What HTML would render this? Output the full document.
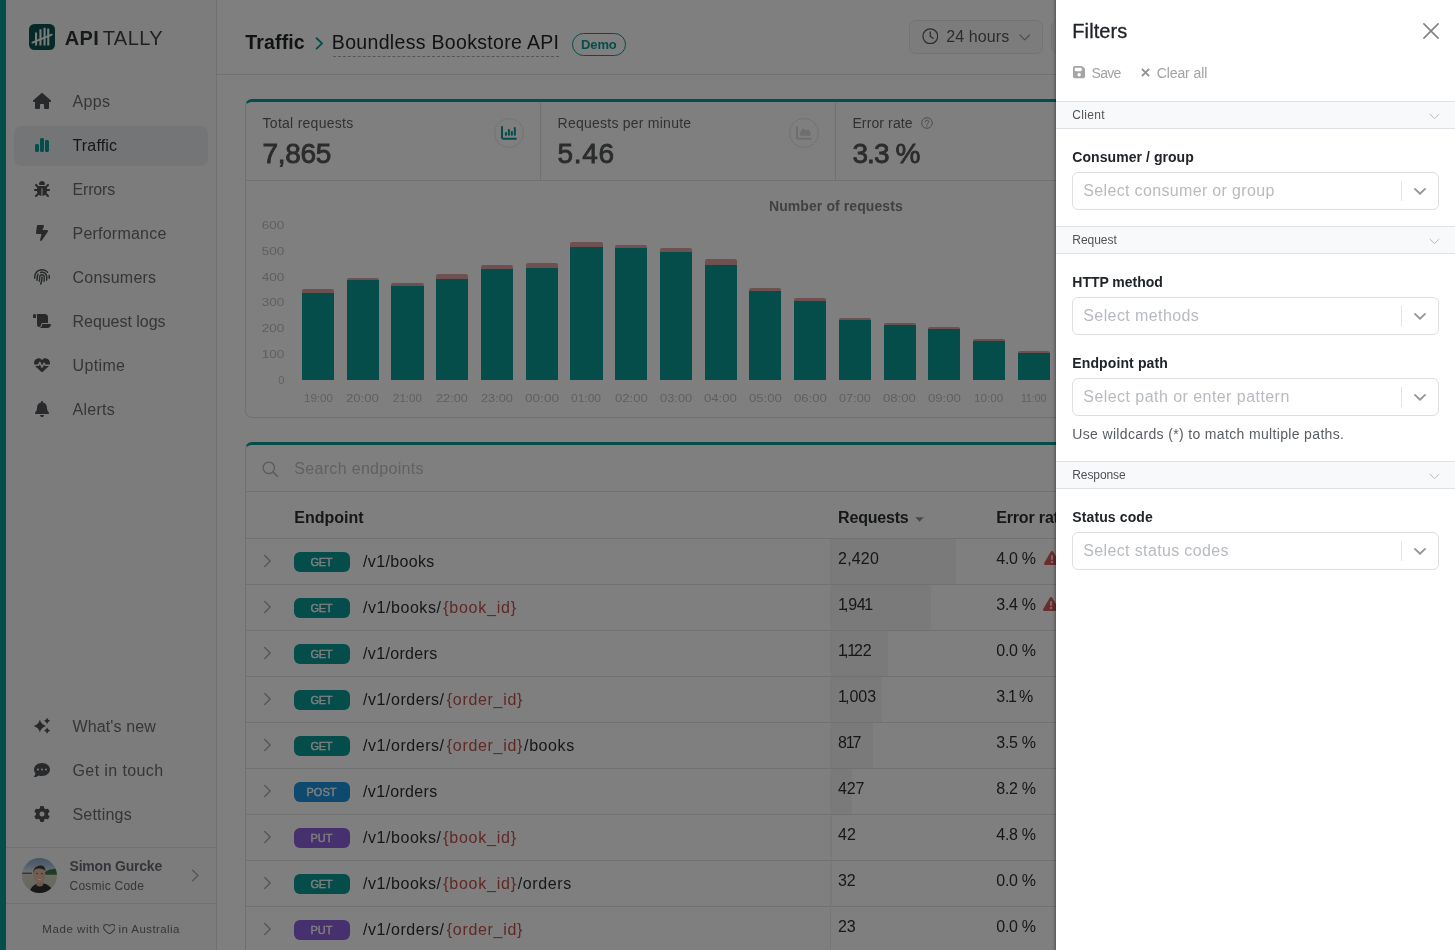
<!DOCTYPE html>
<html lang="en"><head><meta charset="utf-8"><title>Apitally - Traffic</title>
<style>
*{box-sizing:border-box}
html,body{margin:0;padding:0}
body{font-family:"Liberation Sans",sans-serif;background:#fff;width:1455px;height:950px;overflow:hidden;position:relative}
#app{position:absolute;left:0;top:0;width:1455px;height:950px;overflow:hidden;background:#fff;opacity:.9999}
.t{position:absolute;white-space:pre;line-height:1}
.abs{position:absolute}
#stripe{left:0;top:0;width:6px;height:950px;background:#0a9a97}
#sidebar{left:6px;top:0;width:211px;height:950px;background:#f8f9fa;border-right:1px solid #dee2e6}
#active{left:14px;top:126px;width:194px;height:40px;border-radius:7px;background:#e9ebed}
#header{left:217px;top:0;width:1238px;height:75px;border-bottom:1px solid #dee2e6;background:#fff}
.card{background:#fff;border:1px solid #dcdfe3;border-top:3px solid #0a9a97;border-radius:7px}
#card1{left:245px;top:99px;width:1182px;height:319px}
#card2{left:245px;top:442px;width:1182px;height:560px;border-bottom-left-radius:0}
.hl{position:absolute;height:1px;background:#dee2e6}
.vl{position:absolute;width:1px;background:#dee2e6}
#backdrop{left:0;top:0;width:1455px;height:950px;background:#000;opacity:.5}
#panel{left:1056px;top:0;width:399px;height:950px;background:#fff}
#pshadow{left:1052px;top:0;width:4px;height:950px;background:linear-gradient(90deg,rgba(0,0,0,0),rgba(0,0,0,.04) 25%,rgba(0,0,0,.12) 60%,rgba(0,0,0,.3))}
.sec{position:absolute;left:0;width:399px;height:28px;background:#f8f9fa;border-top:1px solid #dee2e6;border-bottom:1px solid #dee2e6}
.sel{position:absolute;left:16px;width:367px;height:38px;border:1px solid #dddfe0;border-radius:6px;background:#fff}
.sel i{position:absolute;right:36px;top:8px;width:1px;height:20px;background:#e2e3e4}
.badge{position:absolute;width:56px;height:20px;border-radius:6px}
.bar{position:absolute;background:#0a9a97}
.ebar{position:absolute;background:#dda0a0}
.rbar{position:absolute;left:830px;height:45px;background:#f4f5f7}
</style></head><body>
<div id="app">
 <div class="abs" id="header"></div>
 <div class="abs" id="sidebar"></div>
 <div class="abs" id="stripe"></div>
 <div class="abs" id="active"></div>
 <div class="abs" style="left:29px;top:24px;width:26px;height:25.5px;border-radius:5.5px;background:#0a5250"></div><svg class="abs" style="left:29.00px;top:24.00px" width="26.00" height="25.50" viewBox="0 0 26 25.5"><g fill="#f4f6f6"><rect x="6" y="8.4" width="2.1" height="13.2" rx=".3"/><rect x="10.4" y="5.3" width="2.1" height="16.3" rx=".3"/><rect x="14.5" y="3.8" width="2.1" height="17.8" rx=".3"/><rect x="18.2" y="4.4" width="2.1" height="17.2" rx=".3"/></g><path d="M3.4 18.6 L22.8 10.6" stroke="#f4f6f6" stroke-width="1.8" stroke-linecap="round"/></svg>
<svg class="abs" style="left:33.00px;top:93.00px" width="18.00" height="16.00" viewBox="0 0 576 512"><path fill="#505256" fill-rule="evenodd" d="M575.8 255.5c0 18-15 32.100-32 32.100h-32l.7 160.200c0 2.700-.2 5.400-.5 8.100V472c0 22.100-17.900 40-40 40H456c-1.100 0-2.200 0-3.300-.1c-1.400 .1-2.800 .1-4.200 .1H416 392c-22.100 0-40-17.900-40-40V448 384c0-17.700-14.300-32-32-32H256c-17.700 0-32 14.300-32 32v64 24c0 22.100-17.900 40-40 40H160 128.100c-1.500 0-3-.1-4.500-.2c-1.200 .1-2.400 .2-3.600 .2H104c-22.100 0-40-17.900-40-40V360c0-.9 0-1.900 .1-2.800V287.600H32c-18 0-32-14-32-32.100c0-9 3-17 10-24L266.400 8c7-7 15-8 22-8s15 2 21 7L564.800 231.500c8 7 12 15 11 24z"/></svg>
<svg class="abs" style="left:35.00px;top:137.00px" width="14.00" height="16.00" viewBox="0 0 448 512"><path fill="#0a9a97" fill-rule="evenodd" d="M160 80c0-26.500 21.500-48 48-48h32c26.500 0 48 21.500 48 48V432c0 26.500-21.500 48-48 48H208c-26.500 0-48-21.500-48-48V80zM0 272c0-26.500 21.500-48 48-48H80c26.500 0 48 21.500 48 48V432c0 26.500-21.500 48-48 48H48c-26.500 0-48-21.500-48-48V272zM368 96h32c26.500 0 48 21.500 48 48V432c0 26.500-21.500 48-48 48H368c-26.500 0-48-21.500-48-48V144c0-26.500 21.500-48 48-48z"/></svg>
<svg class="abs" style="left:34.00px;top:181.00px" width="16.00" height="16.00" viewBox="0 0 512 512"><path fill="#505256" fill-rule="evenodd" d="M256 0c53 0 96 43 96 96v3.600c0 15.700-12.700 28.400-28.400 28.400H188.400c-15.700 0-28.400-12.700-28.400-28.400V96c0-53 43-96 96-96zM41.400 105.400c12.500-12.500 32.800-12.500 45.300 0l64 64c.7 .7 1.300 1.400 1.900 2.100c14.200-7.300 30.400-11.400 47.500-11.400H312c17.100 0 33.200 4.100 47.500 11.400c.6-.7 1.200-1.400 1.900-2.100l64-64c12.500-12.500 32.800-12.500 45.300 0s12.500 32.800 0 45.300l-64 64c-.7 .7-1.400 1.300-2.100 1.900c6.200 12 10.100 25.300 11.100 39.500H480c17.700 0 32 14.300 32 32s-14.300 32-32 32H416c0 24.600-5.500 47.800-15.400 68.600c2.200 1.300 4.200 2.900 6 4.800l64 64c12.500 12.500 12.500 32.800 0 45.300s-32.800 12.500-45.300 0l-63.100-63.100c-24.500 21.800-55.800 36.200-90.300 39.600V240c0-8.800-7.200-16-16-16s-16 7.200-16 16V479.200c-34.500-3.400-65.800-17.800-90.300-39.600L86.600 502.600c-12.500 12.500-32.800 12.500-45.300 0s-12.500-32.800 0-45.300l64-64c1.900-1.900 3.900-3.500 6-4.800C101.500 367.800 96 344.600 96 320H32c-17.700 0-32-14.300-32-32s14.300-32 32-32H96.300c1.100-14.100 5-27.500 11.100-39.500c-.7-.6-1.400-1.200-2.100-1.900l-64-64c-12.500-12.500-12.500-32.800 0-45.300z"/></svg>
<svg class="abs" style="left:36.00px;top:225.00px" width="12.00" height="16.00" viewBox="0 0 384 512"><path fill="#505256" fill-rule="evenodd" d="M0 256L28.500 28c2-16 15.600-28 31.800-28H228.900c15 0 27.100 12.100 27.100 27.100c0 3.200-.6 6.500-1.700 9.500L208 160H347.300c20.200 0 36.700 16.400 36.700 36.700c0 7.400-2.200 14.600-6.400 20.700l-192.200 281c-5.900 8.600-15.600 13.700-25.900 13.700h-2.900c-15.700 0-28.500-12.800-28.500-28.500c0-2.300 .3-4.600 .9-6.900L176 288H32c-17.700 0-32-14.300-32-32z"/></svg>
<svg class="abs" style="left:34.00px;top:269.00px" width="16.00" height="16.00" viewBox="0 0 512 512"><path fill="#505256" fill-rule="evenodd" d="M48 256C48 141.100 141.100 48 256 48c63.100 0 119.600 28.100 157.800 72.500c8.600 10.100 23.800 11.200 33.800 2.600s11.200-23.800 2.600-33.800C403.300 34.600 333.700 0 256 0C114.600 0 0 114.600 0 256v40c0 13.300 10.700 24 24 24s24-10.700 24-24V256zm458.500-52.900c-2.700-13-15.500-21.300-28.400-18.500s-21.300 15.500-18.500 28.400c2.900 13.900 4.500 28.300 4.500 43.100v40c0 13.300 10.700 24 24 24s24-10.700 24-24V256c0-18.100-1.900-35.800-5.500-52.900zM256 80c-19 0-37.400 3-54.500 8.600c-15.200 5-18.700 23.700-8.300 35.900c7.100 8.300 18.800 10.800 29.400 7.900c10.600-2.900 21.800-4.400 33.400-4.400c70.700 0 128 57.300 128 128v24.900c0 25.200-1.500 50.300-4.400 75.300c-1.700 14.600 9.400 27.800 24.200 27.800c11.800 0 21.900-8.600 23.300-20.300c3.300-27.400 5-55 5-82.700V256c0-97.200-78.800-176-176-176zM150.700 148.700c-9.100-10.600-25.300-11.400-33.900-.4C93.700 178 80 215.400 80 256v24.900c0 24.200-2.600 48.400-7.800 71.900C68.800 368.400 80.100 384 96.100 384c10.500 0 19.900-7 22.200-17.300c6.400-28.100 9.700-56.800 9.700-85.800V256c0-27.200 8.500-52.400 22.900-73.100c7.200-10.400 8-24.600-.2-34.200zM256 160c-53 0-96 43-96 96v24.900c0 35.900-4.600 71.500-13.800 106.100c-3.800 14.300 6.700 29 21.500 29c9.500 0 17.900-6.200 20.400-15.400c10.500-39 15.900-79.200 15.900-119.700V256c0-28.700 23.300-52 52-52s52 23.300 52 52v24.900c0 36.300-3.500 72.400-10.400 107.900c-2.700 13.900 7.700 27.200 21.800 27.200c10.200 0 19-7 21-17c7.700-38.800 11.600-78.300 11.600-118.100V256c0-53-43-96-96-96zm24 96c0-13.300-10.700-24-24-24s-24 10.700-24 24v24.900c0 59.900-11 119.300-32.500 175.200l-5.900 15.300c-4.800 12.400 1.400 26.300 13.800 31s26.300-1.400 31-13.800l5.900-15.300C267.900 411.900 280 346.700 280 280.900V256z"/></svg>
<svg class="abs" style="left:33.00px;top:313.00px" width="18.00" height="16.00" viewBox="0 0 576 512"><path fill="#505256" fill-rule="evenodd" d="M0 80v48c0 17.700 14.300 32 32 32H48 96V80c0-26.500-21.500-48-48-48S0 53.500 0 80zM112 32c10 13.400 16 30 16 48V384c0 35.300 28.700 64 64 64s64-28.700 64-64v-5.300c0-32.400 26.300-58.700 58.700-58.700H480V128c0-53-43-96-96-96H112zM464 480c61.900 0 112-50.100 112-112c0-8.800-7.200-16-16-16H314.700c-14.700 0-26.700 11.900-26.700 26.700V384c0 53-43 96-96 96H368h96z"/></svg>
<svg class="abs" style="left:34.00px;top:357.00px" width="16.00" height="16.00" viewBox="0 0 512 512"><path fill="#505256" fill-rule="evenodd" d="M228.300 469.100L47.600 300.400c-4.200-3.900-8.200-8.100-11.900-12.400h87c22.600 0 43-13.600 51.700-34.500l10.500-25.200 49.300 109.500c3.800 8.500 12.100 14 21.400 14.100s17.800-5 22-13.300L320 253.700l1.700 3.400c9.500 19 28.900 31 50.100 31H476.300c-3.700 4.300-7.700 8.500-11.900 12.400L283.700 469.100c-7.500 7-17.400 10.900-27.700 10.900s-20.200-3.900-27.700-10.900zM503.700 240h-132c-3 0-5.800-1.700-7.200-4.400l-23.200-46.300c-4.100-8.100-12.400-13.300-21.500-13.300s-17.400 5.100-21.500 13.300l-41.400 82.800L205.900 158.200c-3.900-8.700-12.700-14.300-22.200-14.100s-18.100 5.900-21.800 14.800l-31.800 76.300c-1.200 3-4.200 4.900-7.400 4.900H16c-2.600 0-5 .4-7.300 1.100C3 225.200 0 208.200 0 190.900v-5.800c0-69.900 50.500-129.500 119.400-141C165 36.500 211.400 51.400 244 84l12 12 12-12c32.600-32.600 79-47.500 124.600-39.900C461.500 55.600 512 115.200 512 185.100v5.800c0 16.900-2.800 33.500-8.300 49.100z"/></svg>
<svg class="abs" style="left:35.00px;top:401.00px" width="14.00" height="16.00" viewBox="0 0 448 512"><path fill="#505256" fill-rule="evenodd" d="M224 0c-17.700 0-32 14.300-32 32V51.200C119 66 64 130.600 64 208v18.800c0 47-17.300 92.400-48.500 127.600l-7.400 8.300c-8.400 9.400-10.400 22.900-5.300 34.400S19.400 416 32 416H416c12.600 0 24-7.400 29.200-18.900s3.100-25-5.300-34.400l-7.400-8.300C401.300 319.200 384 273.900 384 226.800V208c0-77.400-55-142-128-156.800V32c0-17.700-14.300-32-32-32zm45.300 493.300c12-12 18.700-28.300 18.700-45.300H224 160c0 17 6.700 33.300 18.700 45.300s28.300 18.700 45.300 18.700s33.300-6.700 45.300-18.700z"/></svg>
<svg class="abs" style="left:33.00px;top:717.00px" width="18.00" height="18.00" viewBox="0 0 18 18"><path d="M6.90 2.80 Q8.29 7.61 13.10 9.00 Q8.29 10.39 6.90 15.20 Q5.51 10.39 0.70 9.00 Q5.51 7.61 6.90 2.80 Z M14.10 0.70 Q14.80 3.10 17.20 3.80 Q14.80 4.50 14.10 6.90 Q13.40 4.50 11.00 3.80 Q13.40 3.10 14.10 0.70 Z M14.10 10.50 Q14.80 12.90 17.20 13.60 Q14.80 14.30 14.10 16.70 Q13.40 14.30 11.00 13.60 Q13.40 12.90 14.10 10.50 Z" fill="#505256"/></svg>
<svg class="abs" style="left:34.00px;top:762.00px" width="16.00" height="16.00" viewBox="0 0 512 512"><path fill="#505256" fill-rule="evenodd" d="M256 448c141.400 0 256-93.100 256-208S397.400 32 256 32S0 125.100 0 240c0 45.100 17.700 86.800 47.700 120.900c-1.900 24.500-11.400 46.300-21.400 62.900c-5.500 9.200-11.100 16.600-15.200 21.600c-2.100 2.500-3.700 4.400-4.900 5.700c-.6 .6-1 1.100-1.300 1.400l-.3 .3c-4.600 4.600-5.900 11.400-3.400 17.400c2.500 6 8.300 9.900 14.800 9.900c28.700 0 57.600-8.900 81.600-19.300c22.900-10 42.400-21.900 54.300-30.600c31.800 11.500 67 17.900 104.100 17.900zM128 208a32 32 0 1 1 0 64 32 32 0 1 1 0-64zm128 0a32 32 0 1 1 0 64 32 32 0 1 1 0-64zm96 32a32 32 0 1 1 64 0 32 32 0 1 1 -64 0z"/></svg>
<svg class="abs" style="left:34.00px;top:806.00px" width="16.00" height="16.00" viewBox="0 0 512 512"><path fill="#505256" fill-rule="evenodd" d="M495.900 166.600c3.200 8.700 .5 18.400-6.400 24.600l-43.300 39.400c1.100 8.300 1.700 16.800 1.700 25.400s-.6 17.100-1.700 25.400l43.300 39.400c6.900 6.200 9.600 15.900 6.400 24.600c-4.400 11.900-9.700 23.300-15.800 34.300l-4.700 8.100c-6.600 11-14 21.400-22.100 31.200c-5.900 7.200-15.700 9.600-24.500 6.800l-55.700-17.700c-13.400 10.300-28.200 18.900-44 25.400l-12.500 57.100c-2 9.100-9 16.300-18.200 17.800c-13.800 2.300-28 3.500-42.500 3.500s-28.700-1.200-42.500-3.500c-9.200-1.500-16.200-8.700-18.200-17.800l-12.500-57.100c-15.800-6.500-30.600-15.100-44-25.400L83.100 425.900c-8.800 2.800-18.600 .3-24.500-6.800c-8.100-9.800-15.500-20.200-22.100-31.200l-4.700-8.100c-6.100-11-11.400-22.400-15.800-34.300c-3.200-8.700-.5-18.400 6.400-24.600l43.300-39.400C64.600 273.100 64 264.600 64 256s.6-17.100 1.700-25.400L22.400 191.200c-6.900-6.200-9.600-15.900-6.400-24.600c4.400-11.900 9.700-23.300 15.800-34.300l4.700-8.100c6.600-11 14-21.400 22.100-31.200c5.900-7.200 15.700-9.600 24.500-6.800l55.700 17.700c13.400-10.300 28.200-18.900 44-25.400l12.500-57.100c2-9.100 9-16.300 18.200-17.800C227.300 1.200 241.500 0 256 0s28.700 1.200 42.500 3.500c9.200 1.500 16.200 8.700 18.200 17.800l12.500 57.100c15.800 6.500 30.600 15.100 44 25.400l55.700-17.700c8.800-2.800 18.600-.3 24.500 6.800c8.100 9.800 15.500 20.200 22.100 31.200l4.700 8.100c6.100 11 11.400 22.400 15.800 34.300zM256 336a80 80 0 1 0 0-160 80 80 0 1 0 0 160z"/></svg>
<div class="hl" style="left:6px;top:847px;width:210px"></div><div class="hl" style="left:6px;top:903px;width:210px"></div><svg class="abs" style="left:22.00px;top:857.70px" width="35.00" height="35.00" viewBox="0 0 35 35"><defs><clipPath id="av"><circle cx="17.5" cy="17.5" r="17.5"/></clipPath><linearGradient id="sky" x1="0" y1="0" x2="0" y2="1"><stop offset="0" stop-color="#7fa6cf"/><stop offset=".25" stop-color="#a9c4dc"/><stop offset=".42" stop-color="#dfe5e8"/><stop offset=".44" stop-color="#d9d5c9"/><stop offset="1" stop-color="#cfcabd"/></linearGradient><filter id="bl" x="-10%" y="-10%" width="120%" height="120%"><feGaussianBlur stdDeviation=".55"/></filter></defs><g clip-path="url(#av)"><g filter="url(#bl)"><rect x="-2" y="-2" width="39" height="39" fill="url(#sky)"/><rect x="0" y="14.6" width="10" height="1.3" fill="#5b6468"/><path d="M22 15.6 C23 12.6 27 11 36 10.4 V16.8 H22 Z" fill="#3f7a46"/><path d="M7 37 C8 29 12 26 17.5 25.2 C24 25 30 27.5 32 37 Z" fill="#2f3032"/><path d="M14.5 22 H21 V27.5 Q17.7 29.5 14.5 27.5 Z" fill="#d9ad98"/><ellipse cx="17.4" cy="16.4" rx="6" ry="8.6" fill="#e6bba6"/><path d="M11.3 15.5 C10.4 6.5 23.8 4.6 23.4 13 C22 9.8 14 9.6 12.4 12 Z" fill="#4a3b33"/><path d="M14.8 20.6 Q17.6 23.6 20.4 20.6 Q17.6 21.6 14.8 20.6 Z" fill="#fbf6f2"/><ellipse cx="15" cy="15.6" rx="1.1" ry=".6" fill="#7a5a4c"/><ellipse cx="19.9" cy="15.6" rx="1.1" ry=".6" fill="#7a5a4c"/></g></g></svg>
<svg class="abs" style="left:191.00px;top:869.00px" width="9.00" height="13.00" viewBox="0 0 9 13"><path d="M1.6 1.2 L7 6.5 L1.6 11.8" fill="none" stroke="#a4a8ac" stroke-width="1.25" stroke-linecap="round" stroke-linejoin="round"/></svg>
<svg class="abs" style="left:102.60px;top:923.60px" width="12.80" height="10.60" viewBox="0 0 12.8 10.6"><path d="M6.4 2 C7.2 .9 8.3 .6 9.2 .6 C11 .6 12.2 2 12.2 3.6 C12.2 6 9.4 8 6.4 10 C3.4 8 .6 6 .6 3.6 C.6 2 1.8 .6 3.6 .6 C4.5 .6 5.6 .9 6.4 2 Z" fill="none" stroke="#6b6c6e" stroke-width="1.05"/></svg>

 <span class="t" style="left:72.50px;top:94.00px;font-size:16px;color:#6b6c6e;letter-spacing:0.344px;">Apps</span>
<span class="t" style="left:72.50px;top:138.00px;font-size:16px;color:#2b2f33;letter-spacing:0.173px;">Traffic</span>
<span class="t" style="left:72.50px;top:182.00px;font-size:16px;color:#6b6c6e;letter-spacing:-0.153px;">Errors</span>
<span class="t" style="left:72.50px;top:226.00px;font-size:16px;color:#6b6c6e;letter-spacing:0.221px;">Performance</span>
<span class="t" style="left:72.50px;top:270.00px;font-size:16px;color:#6b6c6e;letter-spacing:0.223px;">Consumers</span>
<span class="t" style="left:72.50px;top:314.00px;font-size:16px;color:#6b6c6e;letter-spacing:-0.036px;">Request logs</span>
<span class="t" style="left:72.50px;top:358.00px;font-size:16px;color:#6b6c6e;letter-spacing:0.362px;">Uptime</span>
<span class="t" style="left:72.50px;top:402.00px;font-size:16px;color:#6b6c6e;letter-spacing:0.259px;">Alerts</span>
<span class="t" style="left:72.50px;top:719.00px;font-size:16px;color:#6b6c6e;letter-spacing:0.122px;">What&#x27;s new</span>
<span class="t" style="left:72.50px;top:763.00px;font-size:16px;color:#6b6c6e;letter-spacing:0.393px;">Get in touch</span>
<span class="t" style="left:72.50px;top:807.00px;font-size:16px;color:#6b6c6e;letter-spacing:0.198px;">Settings</span>
<span class="t" style="left:69.50px;top:859.00px;font-size:14px;font-weight:700;color:#676b70;letter-spacing:-0.202px;">Simon Gurcke</span>
<span class="t" style="left:69.50px;top:880.00px;font-size:12px;color:#6b6c6e;letter-spacing:0.237px;">Cosmic Code</span>
<span class="t" style="left:42.30px;top:924.00px;font-size:11.5px;color:#6b6c6e;letter-spacing:0.572px;">Made with</span>
<span class="t" style="left:118.60px;top:924.00px;font-size:11.5px;color:#6b6c6e;letter-spacing:0.412px;">in Australia</span>
<span class="t" style="left:64.70px;top:28.00px;font-size:20px;font-weight:700;color:#2e3236;letter-spacing:0.328px;">API</span>
<span class="t" style="left:102.70px;top:28.00px;font-size:20px;color:#3d4145;letter-spacing:0.453px;">TALLY</span>
 <svg class="abs" style="left:315.00px;top:36.50px" width="9.00" height="13.00" viewBox="0 0 9 13"><path d="M1.6 1.2 L7 6.4 L1.6 11.6" fill="none" stroke="#0a9a97" stroke-width="1.9" stroke-linecap="round" stroke-linejoin="round"/></svg>
<div class="abs" style="left:332.5px;top:56px;width:226.5px;height:0;border-top:1px dashed #a9adb1"></div><div class="abs" style="left:572px;top:33px;width:54px;height:23px;border:1px solid #0a9a97;border-radius:12px"></div><div class="abs" style="left:909px;top:20px;width:134px;height:34px;border:1px solid #e4e6e9;border-radius:7px;background:#f8f9fa"></div><div class="abs" style="left:1051px;top:20px;width:134px;height:34px;border:1px solid #e4e6e9;border-radius:7px;background:#f8f9fa"></div><svg class="abs" style="left:921.60px;top:27.80px" width="16.60" height="16.60" viewBox="0 0 16.6 16.6"><circle cx="8.3" cy="8.3" r="7.4" fill="none" stroke="#55595e" stroke-width="1.25"/><path d="M8.3 3.9 V8.5 L11.2 10.3" fill="none" stroke="#55595e" stroke-width="1.25" stroke-linecap="round" stroke-linejoin="round"/></svg>
<svg class="abs" style="left:1019.30px;top:33.80px" width="11.40" height="7.00" viewBox="0 0 11.4 7"><path d="M.9 1 L5.7 5.8 L10.5 1" fill="none" stroke="#93979b" stroke-width="1.1" stroke-linecap="round" stroke-linejoin="round"/></svg>

 <span class="t" style="left:245.30px;top:33.00px;font-size:19.5px;font-weight:700;color:#212529;letter-spacing:0.145px;">Traffic</span>
<span class="t" style="left:331.80px;top:33.00px;font-size:19.5px;color:#212529;letter-spacing:0.324px;">Boundless Bookstore API</span>
<span class="t" style="left:581.00px;top:38.00px;font-size:13px;font-weight:700;color:#0a9a97;letter-spacing:-0.108px;">Demo</span>
<span class="t" style="left:946.20px;top:29.00px;font-size:16px;color:#55595e;letter-spacing:0.105px;">24 hours</span>
 <div class="abs card" id="card1"></div>
 <div class="hl" style="left:246px;top:180px;width:1180px"></div><div class="vl" style="left:540px;top:102px;height:78px"></div><div class="vl" style="left:835px;top:102px;height:78px"></div><div class="vl" style="left:1131px;top:102px;height:78px"></div><div class="ebar" style="left:301.90px;top:289.00px;width:32.2px;height:4.00px;border-radius:2px 2px 0 0"></div><div class="bar" style="left:301.90px;top:292.50px;width:32.2px;height:87.30px"></div>
<div class="ebar" style="left:346.64px;top:277.80px;width:32.2px;height:3.10px;border-radius:2px 2px 0 0"></div><div class="bar" style="left:346.64px;top:280.40px;width:32.2px;height:99.40px"></div>
<div class="ebar" style="left:391.38px;top:283.00px;width:32.2px;height:3.30px;border-radius:2px 2px 0 0"></div><div class="bar" style="left:391.38px;top:285.80px;width:32.2px;height:94.00px"></div>
<div class="ebar" style="left:436.12px;top:274.00px;width:32.2px;height:5.70px;border-radius:2px 2px 0 0"></div><div class="bar" style="left:436.12px;top:279.20px;width:32.2px;height:100.60px"></div>
<div class="ebar" style="left:480.86px;top:264.80px;width:32.2px;height:4.20px;border-radius:2px 2px 0 0"></div><div class="bar" style="left:480.86px;top:268.50px;width:32.2px;height:111.30px"></div>
<div class="ebar" style="left:525.60px;top:263.00px;width:32.2px;height:5.70px;border-radius:2px 2px 0 0"></div><div class="bar" style="left:525.60px;top:268.20px;width:32.2px;height:111.60px"></div>
<div class="ebar" style="left:570.34px;top:242.00px;width:32.2px;height:5.10px;border-radius:2px 2px 0 0"></div><div class="bar" style="left:570.34px;top:246.60px;width:32.2px;height:133.20px"></div>
<div class="ebar" style="left:615.08px;top:244.60px;width:32.2px;height:3.60px;border-radius:2px 2px 0 0"></div><div class="bar" style="left:615.08px;top:247.70px;width:32.2px;height:132.10px"></div>
<div class="ebar" style="left:659.82px;top:248.00px;width:32.2px;height:4.00px;border-radius:2px 2px 0 0"></div><div class="bar" style="left:659.82px;top:251.50px;width:32.2px;height:128.30px"></div>
<div class="ebar" style="left:704.56px;top:259.30px;width:32.2px;height:6.00px;border-radius:2px 2px 0 0"></div><div class="bar" style="left:704.56px;top:264.80px;width:32.2px;height:115.00px"></div>
<div class="ebar" style="left:749.30px;top:288.20px;width:32.2px;height:2.80px;border-radius:2px 2px 0 0"></div><div class="bar" style="left:749.30px;top:290.50px;width:32.2px;height:89.30px"></div>
<div class="ebar" style="left:794.04px;top:297.70px;width:32.2px;height:3.90px;border-radius:2px 2px 0 0"></div><div class="bar" style="left:794.04px;top:301.10px;width:32.2px;height:78.70px"></div>
<div class="ebar" style="left:838.78px;top:318.20px;width:32.2px;height:2.20px;border-radius:2px 2px 0 0"></div><div class="bar" style="left:838.78px;top:319.90px;width:32.2px;height:59.90px"></div>
<div class="ebar" style="left:883.52px;top:322.80px;width:32.2px;height:2.20px;border-radius:2px 2px 0 0"></div><div class="bar" style="left:883.52px;top:324.50px;width:32.2px;height:55.30px"></div>
<div class="ebar" style="left:928.26px;top:327.10px;width:32.2px;height:2.30px;border-radius:2px 2px 0 0"></div><div class="bar" style="left:928.26px;top:328.90px;width:32.2px;height:50.90px"></div>
<div class="ebar" style="left:973.00px;top:339.20px;width:32.2px;height:2.30px;border-radius:2px 2px 0 0"></div><div class="bar" style="left:973.00px;top:341.00px;width:32.2px;height:38.80px"></div>
<div class="ebar" style="left:1017.74px;top:351.10px;width:32.2px;height:1.90px;border-radius:2px 2px 0 0"></div><div class="bar" style="left:1017.74px;top:352.50px;width:32.2px;height:27.30px"></div>
<div class="ebar" style="left:1062.48px;top:345.00px;width:32.2px;height:2.50px;border-radius:2px 2px 0 0"></div><div class="bar" style="left:1062.48px;top:347.00px;width:32.2px;height:32.80px"></div>
<div class="ebar" style="left:1107.22px;top:330.00px;width:32.2px;height:3.50px;border-radius:2px 2px 0 0"></div><div class="bar" style="left:1107.22px;top:333.00px;width:32.2px;height:46.80px"></div>
<div class="ebar" style="left:1151.96px;top:318.00px;width:32.2px;height:3.50px;border-radius:2px 2px 0 0"></div><div class="bar" style="left:1151.96px;top:321.00px;width:32.2px;height:58.80px"></div>
<div class="ebar" style="left:1196.70px;top:322.00px;width:32.2px;height:3.50px;border-radius:2px 2px 0 0"></div><div class="bar" style="left:1196.70px;top:325.00px;width:32.2px;height:54.80px"></div>
<div class="ebar" style="left:1241.44px;top:310.00px;width:32.2px;height:4.50px;border-radius:2px 2px 0 0"></div><div class="bar" style="left:1241.44px;top:314.00px;width:32.2px;height:65.80px"></div>
<div class="ebar" style="left:1286.18px;top:300.00px;width:32.2px;height:4.50px;border-radius:2px 2px 0 0"></div><div class="bar" style="left:1286.18px;top:304.00px;width:32.2px;height:75.80px"></div>
<div class="ebar" style="left:1330.92px;top:295.00px;width:32.2px;height:4.50px;border-radius:2px 2px 0 0"></div><div class="bar" style="left:1330.92px;top:299.00px;width:32.2px;height:80.80px"></div>
<div class="ebar" style="left:1375.66px;top:340.00px;width:32.2px;height:2.50px;border-radius:2px 2px 0 0"></div><div class="bar" style="left:1375.66px;top:342.00px;width:32.2px;height:37.80px"></div>

 <span class="t" style="left:262.60px;top:116.00px;font-size:14px;color:#626364;letter-spacing:0.264px;">Total requests</span>
<span class="t" style="left:262.60px;top:140.00px;font-size:28px;color:#565758;letter-spacing:-0.345px;-webkit-text-stroke:0.85px #565758;">7,865</span>
<span class="t" style="left:557.60px;top:116.00px;font-size:14px;color:#626364;letter-spacing:0.240px;">Requests per minute</span>
<span class="t" style="left:557.60px;top:140.00px;font-size:28px;color:#565758;letter-spacing:0.667px;-webkit-text-stroke:0.85px #565758;">5.46</span>
<span class="t" style="left:852.40px;top:116.00px;font-size:14px;color:#626364;letter-spacing:0.119px;">Error rate</span>
<span class="t" style="left:852.40px;top:140.00px;font-size:28px;color:#565758;letter-spacing:-0.902px;-webkit-text-stroke:0.85px #565758;">3.3 %</span>
<span class="t" style="left:769.00px;top:199.00px;font-size:14px;font-weight:700;color:#828282;letter-spacing:0.085px;">Number of requests</span>
<span class="t" style="left:0.00px;top:220.00px;font-size:11px;color:#bcbec0;transform:scaleX(1.2310);transform-origin:right 50%;left:auto;right:1170.7px;">600</span>
<span class="t" style="left:0.00px;top:246.00px;font-size:11px;color:#bcbec0;transform:scaleX(1.2310);transform-origin:right 50%;left:auto;right:1170.7px;">500</span>
<span class="t" style="left:0.00px;top:272.00px;font-size:11px;color:#bcbec0;transform:scaleX(1.2310);transform-origin:right 50%;left:auto;right:1170.7px;">400</span>
<span class="t" style="left:0.00px;top:297.00px;font-size:11px;color:#bcbec0;transform:scaleX(1.2310);transform-origin:right 50%;left:auto;right:1170.7px;">300</span>
<span class="t" style="left:0.00px;top:323.00px;font-size:11px;color:#bcbec0;transform:scaleX(1.2310);transform-origin:right 50%;left:auto;right:1170.7px;">200</span>
<span class="t" style="left:0.00px;top:349.00px;font-size:11px;color:#bcbec0;transform:scaleX(1.2310);transform-origin:right 50%;left:auto;right:1170.7px;">100</span>
<span class="t" style="left:0.00px;top:375.00px;font-size:11px;color:#bcbec0;left:auto;right:1170.7px;">0</span>
<span class="t" style="left:303.55px;top:393.00px;font-size:11px;color:#bcbec0;transform:scaleX(1.0497);transform-origin:left 50%;">19:00</span>
<span class="t" style="left:346.29px;top:393.00px;font-size:11px;color:#bcbec0;transform:scaleX(1.1950);transform-origin:left 50%;">20:00</span>
<span class="t" style="left:393.03px;top:393.00px;font-size:11px;color:#bcbec0;transform:scaleX(1.0497);transform-origin:left 50%;">21:00</span>
<span class="t" style="left:436.32px;top:393.00px;font-size:11px;color:#bcbec0;transform:scaleX(1.1551);transform-origin:left 50%;">22:00</span>
<span class="t" style="left:481.06px;top:393.00px;font-size:11px;color:#bcbec0;transform:scaleX(1.1551);transform-origin:left 50%;">23:00</span>
<span class="t" style="left:524.70px;top:393.00px;font-size:11px;color:#bcbec0;transform:scaleX(1.2350);transform-origin:left 50%;">00:00</span>
<span class="t" style="left:571.44px;top:393.00px;font-size:11px;color:#bcbec0;transform:scaleX(1.0897);transform-origin:left 50%;">01:00</span>
<span class="t" style="left:614.73px;top:393.00px;font-size:11px;color:#bcbec0;transform:scaleX(1.1950);transform-origin:left 50%;">02:00</span>
<span class="t" style="left:659.77px;top:393.00px;font-size:11px;color:#bcbec0;transform:scaleX(1.1732);transform-origin:left 50%;">03:00</span>
<span class="t" style="left:704.21px;top:393.00px;font-size:11px;color:#bcbec0;transform:scaleX(1.1950);transform-origin:left 50%;">04:00</span>
<span class="t" style="left:748.95px;top:393.00px;font-size:11px;color:#bcbec0;transform:scaleX(1.1950);transform-origin:left 50%;">05:00</span>
<span class="t" style="left:793.69px;top:393.00px;font-size:11px;color:#bcbec0;transform:scaleX(1.1950);transform-origin:left 50%;">06:00</span>
<span class="t" style="left:838.98px;top:393.00px;font-size:11px;color:#bcbec0;transform:scaleX(1.1551);transform-origin:left 50%;">07:00</span>
<span class="t" style="left:883.17px;top:393.00px;font-size:11px;color:#bcbec0;transform:scaleX(1.1950);transform-origin:left 50%;">08:00</span>
<span class="t" style="left:927.91px;top:393.00px;font-size:11px;color:#bcbec0;transform:scaleX(1.1950);transform-origin:left 50%;">09:00</span>
<span class="t" style="left:974.40px;top:393.00px;font-size:11px;color:#bcbec0;transform:scaleX(1.0679);transform-origin:left 50%;">10:00</span>
<span class="t" style="left:1021.14px;top:393.00px;font-size:11px;color:#bcbec0;transform:scaleX(0.9506);transform-origin:left 50%;">11:00</span>
<span class="t" style="left:1064.13px;top:393.00px;font-size:11px;color:#bcbec0;transform:scaleX(1.0497);transform-origin:left 50%;">12:00</span>
<span class="t" style="left:1108.07px;top:393.00px;font-size:11px;color:#bcbec0;transform:scaleX(1.1078);transform-origin:left 50%;">13:00</span>
<span class="t" style="left:1152.81px;top:393.00px;font-size:11px;color:#bcbec0;transform:scaleX(1.1078);transform-origin:left 50%;">14:00</span>
<span class="t" style="left:1197.80px;top:393.00px;font-size:11px;color:#bcbec0;transform:scaleX(1.0897);transform-origin:left 50%;">15:00</span>
<span class="t" style="left:1242.29px;top:393.00px;font-size:11px;color:#bcbec0;transform:scaleX(1.1078);transform-origin:left 50%;">16:00</span>
<span class="t" style="left:1288.03px;top:393.00px;font-size:11px;color:#bcbec0;transform:scaleX(1.0352);transform-origin:left 50%;">17:00</span>
<span class="t" style="left:1331.77px;top:393.00px;font-size:11px;color:#bcbec0;transform:scaleX(1.1078);transform-origin:left 50%;">18:00</span>
<span class="t" style="left:1377.31px;top:393.00px;font-size:11px;color:#bcbec0;transform:scaleX(1.0497);transform-origin:left 50%;">19:00</span>
 <div class="abs" style="left:494.0px;top:118px;width:30px;height:30px;border:1px solid #e1e4e7;border-radius:50%"></div><svg class="abs" style="left:501.00px;top:125.10px" width="15.80" height="15.80" viewBox="0 0 512 512"><path fill="#0a9a97" fill-rule="evenodd" d="M32 32c17.700 0 32 14.300 32 32V400c0 8.800 7.200 16 16 16H480c17.700 0 32 14.300 32 32s-14.300 32-32 32H80c-44.200 0-80-35.800-80-80V64C0 46.300 14.300 32 32 32zM160 224c17.700 0 32 14.300 32 32v64c0 17.700-14.300 32-32 32s-32-14.300-32-32V256c0-17.700 14.300-32 32-32zm128-64V320c0 17.700-14.300 32-32 32s-32-14.300-32-32V160c0-17.700 14.300-32 32-32s32 14.300 32 32zm64 32c17.700 0 32 14.300 32 32v96c0 17.700-14.300 32-32 32s-32-14.300-32-32V224c0-17.700 14.300-32 32-32zM480 96V320c0 17.700-14.300 32-32 32s-32-14.300-32-32V96c0-17.700 14.300-32 32-32s32 14.300 32 32z"/></svg>
<div class="abs" style="left:789.0px;top:118px;width:30px;height:30px;border:1px solid #e1e4e7;border-radius:50%"></div><svg class="abs" style="left:796.00px;top:125.10px" width="15.80" height="15.80" viewBox="0 0 512 512"><path fill="#d9dcdf" fill-rule="evenodd" d="M64 64c0-17.700-14.300-32-32-32S0 46.300 0 64V400c0 44.200 35.800 80 80 80H480c17.700 0 32-14.300 32-32s-14.300-32-32-32H80c-8.800 0-16-7.200-16-16V64zm96 288H448c17.700 0 32-14.300 32-32V251.800c0-7.600-2.700-15-7.700-20.800l-65.800-76.800c-12.100-14.200-33.700-15-46.900-1.800l-21 21c-10 10-26.400 9.200-35.400-1.600l-39.200-47c-12.600-15.100-35.700-15.400-48.700-.6L135.900 215c-5.100 5.800-7.900 13.300-7.900 21.100v84c0 17.700 14.300 32 32 32z"/></svg>
<div class="abs" style="left:1084.0px;top:118px;width:30px;height:30px;border:1px solid #e1e4e7;border-radius:50%"></div><svg class="abs" style="left:1091.00px;top:125.10px" width="15.80" height="15.80" viewBox="0 0 512 512"><path fill="#d9dcdf" fill-rule="evenodd" d="M64 64c0-17.700-14.300-32-32-32S0 46.300 0 64V400c0 44.200 35.800 80 80 80H480c17.700 0 32-14.300 32-32s-14.300-32-32-32H80c-8.800 0-16-7.200-16-16V64zm96 288H448c17.700 0 32-14.300 32-32V251.800c0-7.600-2.700-15-7.700-20.800l-65.800-76.800c-12.100-14.200-33.700-15-46.900-1.800l-21 21c-10 10-26.400 9.200-35.400-1.600l-39.200-47c-12.600-15.100-35.700-15.400-48.700-.6L135.900 215c-5.100 5.800-7.900 13.300-7.900 21.100v84c0 17.700 14.300 32 32 32z"/></svg>
<svg class="abs" style="left:921.20px;top:117.40px" width="12.00" height="12.00" viewBox="0 0 12 12"><circle cx="6" cy="6" r="5.3" fill="none" stroke="#8a8e92" stroke-width=".9"/><path d="M4.4 4.8 A1.7 1.6 0 1 1 6.6 6.3 Q6 6.6 6 7.3" fill="none" stroke="#8a8e92" stroke-width=".9" stroke-linecap="round"/><circle cx="6" cy="8.9" r=".6" fill="#8a8e92"/></svg>
<div class="abs card" id="card2"></div>
 <div class="hl" style="left:246px;top:491px;width:1180px"></div><div class="hl" style="left:246px;top:538px;width:1180px"></div><div class="rbar" style="top:539px;width:126.0px"></div><div class="badge" style="left:294px;top:552.0px;background:#0a9a97"></div><svg class="abs" style="left:263px;top:554.1px" width="9" height="14" viewBox="0 0 9 14"><path d="M1.7 1.5 L7.2 7 L1.7 12.5" fill="none" stroke="#a4a8ac" stroke-width="1.25" stroke-linecap="round" stroke-linejoin="round"/></svg><svg class="abs" style="left:1043.80px;top:550.00px" width="16.00" height="16.00" viewBox="0 0 512 512"><path fill="#d05a5a" fill-rule="evenodd" d="M256 32c14.200 0 27.300 7.500 34.500 19.800l216 368c7.300 12.400 7.300 27.700 .2 40.100S486.300 480 472 480H40c-14.300 0-27.600-7.700-34.700-20.100s-7-27.800 .2-40.100l216-368C228.700 39.500 241.800 32 256 32zm0 128c-13.300 0-24 10.700-24 24V296c0 13.300 10.700 24 24 24s24-10.700 24-24V184c0-13.300-10.700-24-24-24zm32 224a32 32 0 1 0 -64 0 32 32 0 1 0 64 0z"/></svg>
<div class="hl" style="left:246px;top:584px;width:1180px"></div><div class="rbar" style="top:585px;width:101.1px"></div><div class="badge" style="left:294px;top:598.0px;background:#0a9a97"></div><svg class="abs" style="left:263px;top:600.1px" width="9" height="14" viewBox="0 0 9 14"><path d="M1.7 1.5 L7.2 7 L1.7 12.5" fill="none" stroke="#a4a8ac" stroke-width="1.25" stroke-linecap="round" stroke-linejoin="round"/></svg><svg class="abs" style="left:1042.70px;top:596.00px" width="16.00" height="16.00" viewBox="0 0 512 512"><path fill="#d05a5a" fill-rule="evenodd" d="M256 32c14.200 0 27.300 7.500 34.500 19.800l216 368c7.300 12.400 7.300 27.700 .2 40.100S486.300 480 472 480H40c-14.300 0-27.600-7.700-34.700-20.100s-7-27.800 .2-40.100l216-368C228.700 39.500 241.800 32 256 32zm0 128c-13.300 0-24 10.700-24 24V296c0 13.300 10.700 24 24 24s24-10.700 24-24V184c0-13.300-10.700-24-24-24zm32 224a32 32 0 1 0 -64 0 32 32 0 1 0 64 0z"/></svg>
<div class="hl" style="left:246px;top:630px;width:1180px"></div><div class="rbar" style="top:631px;width:58.4px"></div><div class="badge" style="left:294px;top:644.0px;background:#0a9a97"></div><svg class="abs" style="left:263px;top:646.1px" width="9" height="14" viewBox="0 0 9 14"><path d="M1.7 1.5 L7.2 7 L1.7 12.5" fill="none" stroke="#a4a8ac" stroke-width="1.25" stroke-linecap="round" stroke-linejoin="round"/></svg><div class="hl" style="left:246px;top:676px;width:1180px"></div><div class="rbar" style="top:677px;width:52.2px"></div><div class="badge" style="left:294px;top:690.0px;background:#0a9a97"></div><svg class="abs" style="left:263px;top:692.1px" width="9" height="14" viewBox="0 0 9 14"><path d="M1.7 1.5 L7.2 7 L1.7 12.5" fill="none" stroke="#a4a8ac" stroke-width="1.25" stroke-linecap="round" stroke-linejoin="round"/></svg><div class="hl" style="left:246px;top:722px;width:1180px"></div><div class="rbar" style="top:723px;width:42.5px"></div><div class="badge" style="left:294px;top:736.0px;background:#0a9a97"></div><svg class="abs" style="left:263px;top:738.1px" width="9" height="14" viewBox="0 0 9 14"><path d="M1.7 1.5 L7.2 7 L1.7 12.5" fill="none" stroke="#a4a8ac" stroke-width="1.25" stroke-linecap="round" stroke-linejoin="round"/></svg><div class="hl" style="left:246px;top:768px;width:1180px"></div><div class="rbar" style="top:769px;width:22.2px"></div><div class="badge" style="left:294px;top:782.0px;background:#2093dc"></div><svg class="abs" style="left:263px;top:784.1px" width="9" height="14" viewBox="0 0 9 14"><path d="M1.7 1.5 L7.2 7 L1.7 12.5" fill="none" stroke="#a4a8ac" stroke-width="1.25" stroke-linecap="round" stroke-linejoin="round"/></svg><div class="hl" style="left:246px;top:814px;width:1180px"></div><div class="rbar" style="top:815px;width:2.2px"></div><div class="badge" style="left:294px;top:828.0px;background:#8f60dc"></div><svg class="abs" style="left:263px;top:830.1px" width="9" height="14" viewBox="0 0 9 14"><path d="M1.7 1.5 L7.2 7 L1.7 12.5" fill="none" stroke="#a4a8ac" stroke-width="1.25" stroke-linecap="round" stroke-linejoin="round"/></svg><div class="hl" style="left:246px;top:860px;width:1180px"></div><div class="rbar" style="top:861px;width:1.7px"></div><div class="badge" style="left:294px;top:874.0px;background:#0a9a97"></div><svg class="abs" style="left:263px;top:876.1px" width="9" height="14" viewBox="0 0 9 14"><path d="M1.7 1.5 L7.2 7 L1.7 12.5" fill="none" stroke="#a4a8ac" stroke-width="1.25" stroke-linecap="round" stroke-linejoin="round"/></svg><div class="hl" style="left:246px;top:906px;width:1180px"></div><div class="rbar" style="top:907px;width:1.2px"></div><div class="badge" style="left:294px;top:920.0px;background:#8f60dc"></div><svg class="abs" style="left:263px;top:922.1px" width="9" height="14" viewBox="0 0 9 14"><path d="M1.7 1.5 L7.2 7 L1.7 12.5" fill="none" stroke="#a4a8ac" stroke-width="1.25" stroke-linecap="round" stroke-linejoin="round"/></svg><div class="vl" style="left:830px;top:539px;height:420px;background:#eceef0"></div>
 <span class="t" style="left:294.30px;top:461.00px;font-size:16px;color:#c0c2c4;letter-spacing:0.318px;">Search endpoints</span>
<span class="t" style="left:294.30px;top:510.00px;font-size:16px;font-weight:700;color:#2b2f33;letter-spacing:-0.002px;">Endpoint</span>
<span class="t" style="left:838.10px;top:510.00px;font-size:16px;font-weight:700;color:#2b2f33;letter-spacing:-0.204px;">Requests</span>
<span class="t" style="left:996.20px;top:510.00px;font-size:16px;font-weight:700;color:#2b2f33;letter-spacing:-0.158px;">Error rate</span>
<span class="t" style="left:310.50px;top:557.00px;font-size:11px;color:#fff;letter-spacing:-0.312px;-webkit-text-stroke:0.35px #fff;">GET</span>
<span class="t" style="left:363.00px;top:554.00px;font-size:16px;color:#2b2f33;letter-spacing:0.352px;">/v1/books</span>
<span class="t" style="left:838.10px;top:551.00px;font-size:16px;color:#2b2f33;letter-spacing:0.163px;">2,420</span>
<span class="t" style="left:996.30px;top:551.00px;font-size:16px;color:#2b2f33;letter-spacing:-0.300px;">4.0 %</span>
<span class="t" style="left:310.50px;top:603.00px;font-size:11px;color:#fff;letter-spacing:-0.312px;-webkit-text-stroke:0.35px #fff;">GET</span>
<span class="t" style="left:363.00px;top:600.00px;font-size:16px;color:#2b2f33;letter-spacing:0.551px;">/v1/books/</span>
<span class="t" style="left:443.20px;top:600.00px;font-size:16px;color:#c0504d;letter-spacing:0.758px;">{book_id}</span>
<span class="t" style="left:838.10px;top:597.00px;font-size:16px;color:#2b2f33;letter-spacing:-0.300px;"><b style="font-weight:inherit;margin:0 -2.72px 0 0.00px">1</b>,94<b style="font-weight:inherit;margin:0 -1.69px 0 -1.03px">1</b></span>
<span class="t" style="left:996.30px;top:597.00px;font-size:16px;color:#2b2f33;letter-spacing:-0.300px;">3.4 %</span>
<span class="t" style="left:310.50px;top:649.00px;font-size:11px;color:#fff;letter-spacing:-0.312px;-webkit-text-stroke:0.35px #fff;">GET</span>
<span class="t" style="left:363.00px;top:646.00px;font-size:16px;color:#2b2f33;letter-spacing:0.351px;">/v1/orders</span>
<span class="t" style="left:838.10px;top:643.00px;font-size:16px;color:#2b2f33;letter-spacing:-0.300px;"><b style="font-weight:inherit;margin:0 -2.72px 0 0.00px">1</b>,<b style="font-weight:inherit;margin:0 -1.69px 0 -1.03px">1</b>22</span>
<span class="t" style="left:996.30px;top:643.00px;font-size:16px;color:#2b2f33;letter-spacing:-0.280px;">0.0 %</span>
<span class="t" style="left:310.50px;top:695.00px;font-size:11px;color:#fff;letter-spacing:-0.312px;-webkit-text-stroke:0.35px #fff;">GET</span>
<span class="t" style="left:363.00px;top:692.00px;font-size:16px;color:#2b2f33;letter-spacing:0.541px;">/v1/orders/</span>
<span class="t" style="left:446.80px;top:692.00px;font-size:16px;color:#c0504d;letter-spacing:0.679px;">{order_id}</span>
<span class="t" style="left:838.10px;top:689.00px;font-size:16px;color:#2b2f33;letter-spacing:-0.000px;"><b style="font-weight:inherit;margin:0 -2.05px 0 0.00px">1</b>,003</span>
<span class="t" style="left:996.30px;top:689.00px;font-size:16px;color:#2b2f33;letter-spacing:-0.300px;">3.<b style="font-weight:inherit;margin:0 -1.69px 0 -1.03px">1</b> %</span>
<span class="t" style="left:310.50px;top:741.00px;font-size:11px;color:#fff;letter-spacing:-0.312px;-webkit-text-stroke:0.35px #fff;">GET</span>
<span class="t" style="left:363.00px;top:738.00px;font-size:16px;color:#2b2f33;letter-spacing:0.541px;">/v1/orders/</span>
<span class="t" style="left:446.80px;top:738.00px;font-size:16px;color:#c0504d;letter-spacing:0.679px;">{order_id}</span>
<span class="t" style="left:524.10px;top:738.00px;font-size:16px;color:#2b2f33;letter-spacing:0.592px;">/books</span>
<span class="t" style="left:838.10px;top:735.00px;font-size:16px;color:#2b2f33;letter-spacing:-0.300px;">8<b style="font-weight:inherit;margin:0 -1.69px 0 -1.03px">1</b>7</span>
<span class="t" style="left:996.30px;top:735.00px;font-size:16px;color:#2b2f33;letter-spacing:-0.300px;">3.5 %</span>
<span class="t" style="left:306.55px;top:787.00px;font-size:11px;color:#fff;letter-spacing:-0.018px;-webkit-text-stroke:0.35px #fff;">POST</span>
<span class="t" style="left:363.00px;top:784.00px;font-size:16px;color:#2b2f33;letter-spacing:0.351px;">/v1/orders</span>
<span class="t" style="left:838.10px;top:781.00px;font-size:16px;color:#2b2f33;letter-spacing:-0.202px;">427</span>
<span class="t" style="left:996.30px;top:781.00px;font-size:16px;color:#2b2f33;letter-spacing:-0.300px;">8.2 %</span>
<span class="t" style="left:310.55px;top:833.00px;font-size:11px;color:#fff;letter-spacing:-0.050px;-webkit-text-stroke:0.35px #fff;">PUT</span>
<span class="t" style="left:363.00px;top:830.00px;font-size:16px;color:#2b2f33;letter-spacing:0.551px;">/v1/books/</span>
<span class="t" style="left:443.20px;top:830.00px;font-size:16px;color:#c0504d;letter-spacing:0.758px;">{book_id}</span>
<span class="t" style="left:838.10px;top:827.00px;font-size:16px;color:#2b2f33;letter-spacing:0.103px;">42</span>
<span class="t" style="left:996.30px;top:827.00px;font-size:16px;color:#2b2f33;letter-spacing:-0.300px;">4.8 %</span>
<span class="t" style="left:310.50px;top:879.00px;font-size:11px;color:#fff;letter-spacing:-0.312px;-webkit-text-stroke:0.35px #fff;">GET</span>
<span class="t" style="left:363.00px;top:876.00px;font-size:16px;color:#2b2f33;letter-spacing:0.551px;">/v1/books/</span>
<span class="t" style="left:443.20px;top:876.00px;font-size:16px;color:#c0504d;letter-spacing:0.758px;">{book_id}</span>
<span class="t" style="left:517.80px;top:876.00px;font-size:16px;color:#2b2f33;letter-spacing:0.617px;">/orders</span>
<span class="t" style="left:838.10px;top:873.00px;font-size:16px;color:#2b2f33;letter-spacing:-0.300px;">32</span>
<span class="t" style="left:996.30px;top:873.00px;font-size:16px;color:#2b2f33;letter-spacing:-0.300px;">0.0 %</span>
<span class="t" style="left:310.55px;top:925.00px;font-size:11px;color:#fff;letter-spacing:-0.050px;-webkit-text-stroke:0.35px #fff;">PUT</span>
<span class="t" style="left:363.00px;top:922.00px;font-size:16px;color:#2b2f33;letter-spacing:0.541px;">/v1/orders/</span>
<span class="t" style="left:446.80px;top:922.00px;font-size:16px;color:#c0504d;letter-spacing:0.679px;">{order_id}</span>
<span class="t" style="left:838.10px;top:919.00px;font-size:16px;color:#2b2f33;letter-spacing:-0.300px;">23</span>
<span class="t" style="left:996.30px;top:919.00px;font-size:16px;color:#2b2f33;letter-spacing:-0.300px;">0.0 %</span>
 <svg class="abs" style="left:262.00px;top:460.60px" width="16.50" height="16.50" viewBox="0 0 16.5 16.5"><circle cx="6.8" cy="6.8" r="5.7" fill="none" stroke="#adb1b5" stroke-width="1.25"/><path d="M11 11 L15.6 15.6" stroke="#adb1b5" stroke-width="1.35" stroke-linecap="round"/></svg>
<svg class="abs" style="left:915.00px;top:516.50px" width="9.00" height="5.00" viewBox="0 0 9 5"><path d="M.2 .2 H8.8 L4.5 4.8 Z" fill="#8f9397"/></svg>
<div class="abs" id="backdrop"></div>
 <div class="abs" id="pshadow"></div>
 <div class="abs" id="panel">
 <div class="sec" style="top:101px"></div><svg class="abs" style="left:372.5px;top:112.5px" width="11" height="7" viewBox="0 0 11 7"><path d="M1 1.2 L5.5 5.6 L10 1.2" fill="none" stroke="#b5b9bd" stroke-width="1" stroke-linecap="round" stroke-linejoin="round"/></svg><div class="sec" style="top:226px"></div><svg class="abs" style="left:372.5px;top:237.5px" width="11" height="7" viewBox="0 0 11 7"><path d="M1 1.2 L5.5 5.6 L10 1.2" fill="none" stroke="#b5b9bd" stroke-width="1" stroke-linecap="round" stroke-linejoin="round"/></svg><div class="sec" style="top:461px"></div><svg class="abs" style="left:372.5px;top:472.5px" width="11" height="7" viewBox="0 0 11 7"><path d="M1 1.2 L5.5 5.6 L10 1.2" fill="none" stroke="#b5b9bd" stroke-width="1" stroke-linecap="round" stroke-linejoin="round"/></svg><div class="sel" style="top:172px"><i></i></div><svg class="abs" style="left:357.0px;top:187.0px" width="14" height="9" viewBox="0 0 14 9"><path d="M2 1.9 L7 6.7 L12 1.9" fill="none" stroke="#96989b" stroke-width="1.9" stroke-linecap="round" stroke-linejoin="round"/></svg><div class="sel" style="top:297px"><i></i></div><svg class="abs" style="left:357.0px;top:312.0px" width="14" height="9" viewBox="0 0 14 9"><path d="M2 1.9 L7 6.7 L12 1.9" fill="none" stroke="#96989b" stroke-width="1.9" stroke-linecap="round" stroke-linejoin="round"/></svg><div class="sel" style="top:378px"><i></i></div><svg class="abs" style="left:357.0px;top:393.0px" width="14" height="9" viewBox="0 0 14 9"><path d="M2 1.9 L7 6.7 L12 1.9" fill="none" stroke="#96989b" stroke-width="1.9" stroke-linecap="round" stroke-linejoin="round"/></svg><div class="sel" style="top:532px"><i></i></div><svg class="abs" style="left:357.0px;top:547.0px" width="14" height="9" viewBox="0 0 14 9"><path d="M2 1.9 L7 6.7 L12 1.9" fill="none" stroke="#96989b" stroke-width="1.9" stroke-linecap="round" stroke-linejoin="round"/></svg><svg class="abs" style="left:367.0px;top:23px" width="16" height="16" viewBox="0 0 16 16"><path d="M.9 .9 L15.1 15.1 M15.1 .9 L.9 15.1" stroke="#808080" stroke-width="1.55" stroke-linecap="round"/></svg><svg class="abs" style="left:84.5px;top:68.3px" width="9" height="9" viewBox="0 0 9 9"><path d="M.9 .9 L8.1 8.1 M8.1 .9 L.9 8.1" stroke="#8e9092" stroke-width="1.8"/></svg><svg class="abs" style="left:16.90px;top:65.10px" width="12.25" height="14.00" viewBox="0 0 448 512"><path fill="#a3a5a7" fill-rule="evenodd" d="M64 32C28.700 32 0 60.700 0 96V416c0 35.300 28.700 64 64 64H384c35.300 0 64-28.700 64-64V173.300c0-17-6.700-33.300-18.700-45.300L352 50.700C340 38.700 323.700 32 306.700 32H64zm0 96c0-17.700 14.300-32 32-32H288c17.700 0 32 14.300 32 32v64c0 17.700-14.300 32-32 32H96c-17.700 0-32-14.300-32-32V128zM224 288a64 64 0 1 1 0 128 64 64 0 1 1 0-128z"/></svg>

 <span class="t" style="left:16.30px;top:21.00px;font-size:20px;color:#212529;letter-spacing:0.091px;-webkit-text-stroke:0.3px #212529;">Filters</span>
<span class="t" style="left:35.60px;top:66.00px;font-size:14px;color:#a0a2a4;letter-spacing:-0.741px;">Save</span>
<span class="t" style="left:100.70px;top:66.00px;font-size:14px;color:#a0a2a4;letter-spacing:-0.095px;">Clear all</span>
<span class="t" style="left:16.30px;top:109.00px;font-size:12px;color:#4f5357;letter-spacing:0.303px;">Client</span>
<span class="t" style="left:16.30px;top:234.00px;font-size:12px;color:#4f5357;letter-spacing:-0.034px;">Request</span>
<span class="t" style="left:16.30px;top:469.00px;font-size:12px;color:#4f5357;letter-spacing:-0.107px;">Response</span>
<span class="t" style="left:16.30px;top:150.00px;font-size:14px;font-weight:700;color:#212529;letter-spacing:0.062px;">Consumer / group</span>
<span class="t" style="left:27.30px;top:183.00px;font-size:16px;color:#b7bbbf;letter-spacing:0.339px;">Select consumer or group</span>
<span class="t" style="left:16.30px;top:275.00px;font-size:14px;font-weight:700;color:#212529;letter-spacing:-0.025px;">HTTP method</span>
<span class="t" style="left:27.30px;top:308.00px;font-size:16px;color:#b7bbbf;letter-spacing:0.401px;">Select methods</span>
<span class="t" style="left:16.30px;top:356.00px;font-size:14px;font-weight:700;color:#212529;letter-spacing:0.117px;">Endpoint path</span>
<span class="t" style="left:27.30px;top:389.00px;font-size:16px;color:#b7bbbf;letter-spacing:0.448px;">Select path or enter pattern</span>
<span class="t" style="left:16.30px;top:510.00px;font-size:14px;font-weight:700;color:#212529;letter-spacing:0.114px;">Status code</span>
<span class="t" style="left:27.30px;top:543.00px;font-size:16px;color:#b7bbbf;letter-spacing:0.358px;">Select status codes</span>
<span class="t" style="left:16.30px;top:427.00px;font-size:14px;color:#595d61;letter-spacing:0.345px;">Use wildcards (*) to match multiple paths.</span>
 </div>
</div>
</body></html>
